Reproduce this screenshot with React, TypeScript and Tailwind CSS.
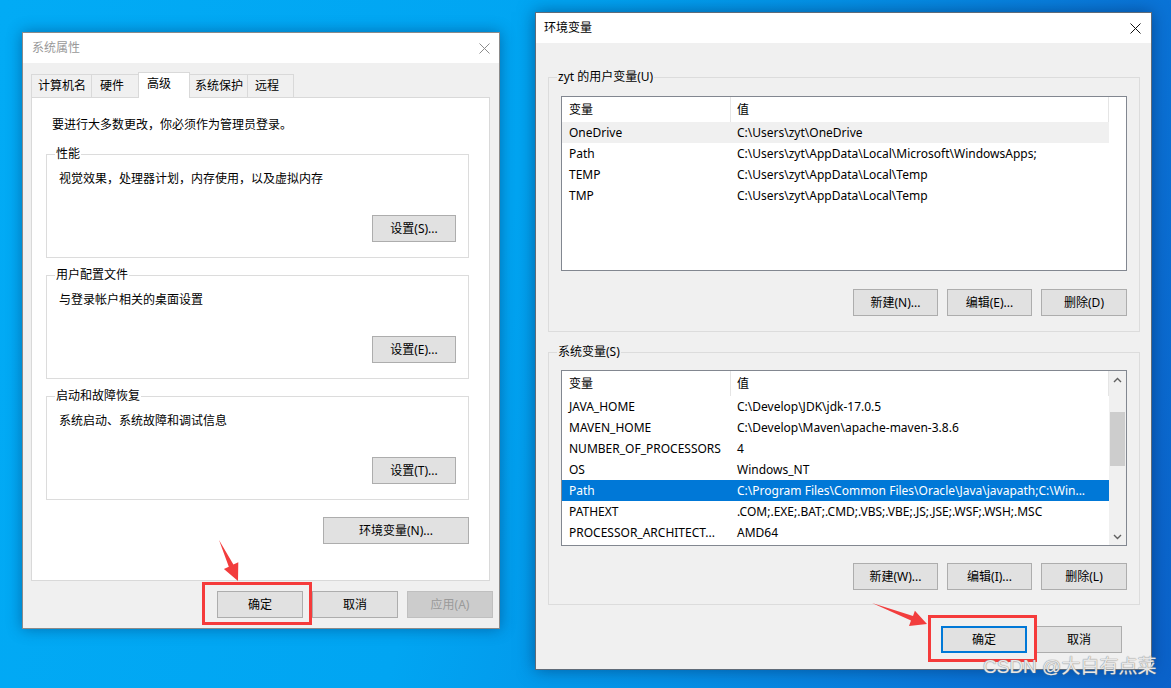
import React from "react";

const font = "font-['Noto_Sans','Noto_Sans_CJK_SC',sans-serif]";

function Btn({ children, w = "w-[85px]", extra = "" }: { children: React.ReactNode; w?: string; extra?: string }) {
  return (
    <div className={`h-[27px] ${w} shrink-0 flex items-center justify-center border border-[#adadad] bg-[#e1e1e1] text-[12px] text-black ${extra}`}>
      {children}
    </div>
  );
}

function CloseX({ color }: { color: string }) {
  return (
    <svg width="11" height="11" viewBox="0 0 11 11">
      <path d="M0.5 0.5 L10.5 10.5 M10.5 0.5 L0.5 10.5" stroke={color} strokeWidth="1" />
    </svg>
  );
}

function GroupBox({ label, className, children }: { label: string; className: string; children: React.ReactNode }) {
  return (
    <div className={`relative border border-[#dcdcdc] ${className}`}>
      <span className="absolute left-[8px] -top-[9px] px-[1px] leading-[16px] text-[12px] text-black bg-inherit">{label}</span>
      {children}
    </div>
  );
}

type Row = [string, string];

const userRows: Row[] = [
  ["OneDrive", "C:\\Users\\zyt\\OneDrive"],
  ["Path", "C:\\Users\\zyt\\AppData\\Local\\Microsoft\\WindowsApps;"],
  ["TEMP", "C:\\Users\\zyt\\AppData\\Local\\Temp"],
  ["TMP", "C:\\Users\\zyt\\AppData\\Local\\Temp"],
];

const sysRows: Row[] = [
  ["JAVA_HOME", "C:\\Develop\\JDK\\jdk-17.0.5"],
  ["MAVEN_HOME", "C:\\Develop\\Maven\\apache-maven-3.8.6"],
  ["NUMBER_OF_PROCESSORS", "4"],
  ["OS", "Windows_NT"],
  ["Path", "C:\\Program Files\\Common Files\\Oracle\\Java\\javapath;C:\\Win..."],
  ["PATHEXT", ".COM;.EXE;.BAT;.CMD;.VBS;.VBE;.JS;.JSE;.WSF;.WSH;.MSC"],
  ["PROCESSOR_ARCHITECT...", "AMD64"],
];

function VarList({ rows, hover, selected, scroll, h }: { rows: Row[]; hover?: number; selected?: number; scroll?: boolean; h: string }) {
  return (
    <div className={`w-[566px] ${h} border border-[#828790] bg-white flex`}>
      <div className="w-[547px] flex flex-col">
        <div className="h-[25px] flex text-[12px] text-black">
          <div className="w-[169px] pl-[7px] flex items-center border-r border-[#e5e5e5]">变量</div>
          <div className="flex-1 pl-[6px] flex items-center border-r border-[#e5e5e5]">值</div>
        </div>
        {rows.map((r, i) => {
          const sel = i === selected;
          const hov = i === hover;
          return (
            <div
              key={r[0] + i}
              className={`h-[21px] flex items-center text-[12px] whitespace-nowrap overflow-hidden ${sel ? "bg-[#0078d7] text-white" : hov ? "bg-[#f0f0f0] text-black" : "text-black"}`}
            >
              <div className="w-[169px] pl-[7px] overflow-hidden">{r[0]}</div>
              <div className="flex-1 pl-[6px] overflow-hidden">{r[1]}</div>
            </div>
          );
        })}
      </div>
      {scroll ? (
        <div className="flex-1 bg-[#f0f0f0] flex flex-col">
          <div className="h-[17px] flex items-center justify-center">
            <svg width="9" height="6" viewBox="0 0 9 6">
              <path d="M1 5 L4.5 1.5 L8 5" stroke="#606060" strokeWidth="1.4" fill="none" />
            </svg>
          </div>
          <div className="flex-1 flex flex-col">
            <div className="mt-[24px] h-[54px] mx-[1px] bg-[#cdcdcd]" />
          </div>
          <div className="h-[17px] flex items-center justify-center">
            <svg width="9" height="6" viewBox="0 0 9 6">
              <path d="M1 1 L4.5 4.5 L8 1" stroke="#606060" strokeWidth="1.4" fill="none" />
            </svg>
          </div>
        </div>
      ) : (
        <div className="flex-1 bg-white" />
      )}
    </div>
  );
}

function SystemProps() {
  const tabs = [
    { t: "计算机名", w: "w-[61px]", pl: "pl-[6px]" },
    { t: "硬件", w: "w-[48px]", pl: "pl-[8px]" },
    { t: "高级", w: "w-[52px]", pl: "pl-[8px]", sel: true },
    { t: "系统保护", w: "w-[59px]", pl: "pl-[5px]" },
    { t: "远程", w: "w-[47px]", pl: "pl-[7px]" },
  ];
  const boxes = [
    { label: "性能", text: "视觉效果，处理器计划，内存使用，以及虚拟内存", btn: "设置(S)..." },
    { label: "用户配置文件", text: "与登录帐户相关的桌面设置", btn: "设置(E)..." },
    { label: "启动和故障恢复", text: "系统启动、系统故障和调试信息", btn: "设置(T)..." },
  ];
  return (
    <div className="absolute left-[22px] top-[32px] w-[478px] h-[597px] flex flex-col bg-[#f0f0f0] border border-[#8a8a8a] shadow-[0_0_14px_rgba(0,40,90,0.45)]">
      <div className="h-[30px] shrink-0 bg-white flex items-center justify-between pl-[9px] pr-[9px]">
        <span className="text-[12px] text-[#999999]">系统属性</span>
        <CloseX color="#8c8c8c" />
      </div>
      <div className="flex-1 flex flex-col pl-[8px] pt-[9px]">
        <div className="flex items-end h-[25px]">
          {tabs.map((t) =>
            t.sel ? (
              <div key={t.t} className={`${t.w} ${t.pl} relative z-10 -mb-px h-[26px] pb-[3px] flex items-center bg-white border border-b-0 border-[#d9d9d9] -ml-px text-[12px] text-black`}>
                {t.t}
              </div>
            ) : (
              <div key={t.t} className={`${t.w} ${t.pl} h-[23px] flex items-center bg-[#f0f0f0] border border-b-0 border-[#d9d9d9] -ml-px first:ml-0 text-[12px] text-black`}>
                {t.t}
              </div>
            )
          )}
        </div>
        <div className="w-[459px] h-[484px] bg-white border border-[#d9d9d9] flex flex-col pl-[14px] pt-[19px]">
          <div className="pl-[6px] leading-[16px] text-[12px] text-black">要进行大多数更改，你必须作为管理员登录。</div>
          <div className="flex flex-col gap-[17px] mt-[21px]">
            {boxes.map((b) => (
              <GroupBox key={b.label} label={b.label} className="w-[423px] h-[104px] bg-white flex flex-col pt-[16px] pl-[12px] pr-[12px]">
                <div className="leading-[16px] text-[12px] text-black">{b.text}</div>
                <div className="mt-[28px] flex justify-end">
                  <Btn w="w-[84px]">{b.btn}</Btn>
                </div>
              </GroupBox>
            ))}
          </div>
          <div className="mt-[17px] w-[423px] flex justify-end">
            <Btn w="w-[146px]">环境变量(N)...</Btn>
          </div>
        </div>
        <div className="mt-[10px] flex justify-end gap-[9px] pr-[6px]">
          <Btn w="w-[86px]">确定</Btn>
          <Btn w="w-[86px]">取消</Btn>
          <Btn w="w-[86px]" extra="!bg-[#cccccc] !border-[#bfbfbf] !text-[#9a9a9a]">应用(A)</Btn>
        </div>
      </div>
    </div>
  );
}

function EnvVars() {
  return (
    <div className="absolute left-[535px] top-[12px] w-[617px] h-[658px] flex flex-col bg-[#f0f0f0] border border-[#5f6b78] shadow-[0_0_16px_rgba(0,30,80,0.5)]">
      <div className="h-[30px] shrink-0 bg-white flex items-center justify-between pl-[8px] pr-[10px]">
        <span className="text-[12px] text-black">环境变量</span>
        <CloseX color="#111111" />
      </div>
      <div className="flex-1 flex flex-col pl-[12px] pt-[34px]">
        <GroupBox label="zyt 的用户变量(U)" className="w-[592px] h-[255px] bg-[#f0f0f0] flex flex-col pl-[12px] pt-[18px]">
          <VarList rows={userRows} hover={0} h="h-[175px]" />
          <div className="mt-[18px] w-[566px] flex justify-end gap-[9px]">
            <Btn>新建(N)...</Btn>
            <Btn>编辑(E)...</Btn>
            <Btn w="w-[86px]">删除(D)</Btn>
          </div>
        </GroupBox>
        <GroupBox label="系统变量(S)" className="mt-[20px] w-[592px] h-[253px] bg-[#f0f0f0] flex flex-col pl-[12px] pt-[17px]">
          <VarList rows={sysRows} selected={4} scroll h="h-[176px]" />
          <div className="mt-[17px] w-[566px] flex justify-end gap-[9px]">
            <Btn>新建(W)...</Btn>
            <Btn>编辑(I)...</Btn>
            <Btn w="w-[86px]">删除(L)</Btn>
          </div>
        </GroupBox>
        <div className="mt-[21px] flex justify-end gap-[9px] pr-[29px]">
          <Btn w="w-[86px]" extra="!border-2 !border-[#0078d7]">确定</Btn>
          <Btn w="w-[86px]">取消</Btn>
        </div>
      </div>
    </div>
  );
}

export default function App() {
  return (
    <div className={`relative w-[1171px] h-[688px] overflow-hidden ${font} bg-[linear-gradient(105deg,#02abf5_0%,#01a5f2_42%,#0492e7_62%,#0a75d8_85%,#0b62ca_100%)]`}>
      <SystemProps />
      <EnvVars />

      {/* annotations */}
      <div className="absolute left-[202px] top-[582px] w-[110px] h-[43px] border-[3px] border-[#f53b3b]" />
      <div className="absolute left-[928px] top-[615px] w-[109px] h-[47px] border-[3px] border-[#f53b3b]" />
      <svg className="absolute left-0 top-0" width="1171" height="688" viewBox="0 0 1171 688">
        <polygon points="219,540 233.4,564.5 238.3,562.2 238,581 223.9,569 228.8,566.7" fill="#f23d3d" />
        <polygon points="872,603 913,616 914.9,610.8 927,624 909,626 911,620.6" fill="#f23d3d" />
      </svg>
      <div className="absolute left-[983px] top-[654px] text-[19px] leading-[26px] text-white/80 font-['Liberation_Sans','Noto_Sans_CJK_SC',sans-serif] [text-shadow:0_0_1px_#888,0_0_1px_#888]">
        CSDN @大白有点菜
      </div>
    </div>
  );
}
